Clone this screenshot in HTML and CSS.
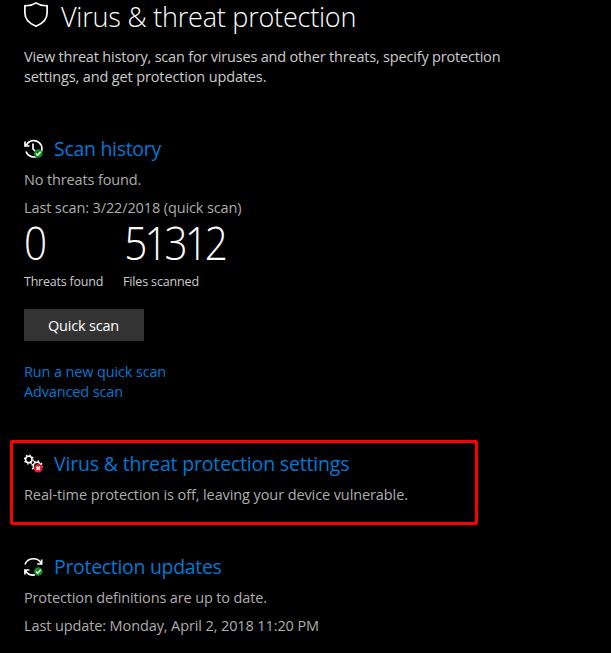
FILE: index.html
```
<!DOCTYPE html>
<html lang="en">
<head>
<meta charset="utf-8">
<title>Virus &amp; threat protection</title>
<link rel="stylesheet" href="styles.css">
</head>
<body>
<main class="page">
  <header class="page-header">
    <svg class="shield" width="26" height="28" viewBox="0 0 26 28" fill="none" stroke="#fff" stroke-width="1.7" stroke-linejoin="round"><path d="M13 2.9C10 5 6 6 1.9 5.7V13c0 6.400 4.500 10.600 11.100 13.300C19.600 23.600 24.100 19.400 24.100 13V5.700C20 6 16 5 13 2.900Z"/></svg>
    <h1>Virus &amp; threat protection</h1>
  </header>
  <p class="intro"><span class="intro-first">View threat history, scan for viruses and other threats, specify protection</span><br>settings, and get protection updates.</p>

  <section class="history">
    <div class="heading">
      <svg class="icon" width="20" height="20" viewBox="0 0 20 20" fill="none" stroke="#fff" stroke-width="1.700"><path d="M2.200 6.500A8.200 8.200 0 1 1 2 12.500M1 2.500v4.500h4.500M9 4.500v5.500l3 3"/><circle cx="14.300" cy="14.500" r="4.300" fill="#0c8f1c" stroke="none"/><path d="M12 14.500l1.700 1.700 3-3.400" stroke-width="1.400"/></svg>
      <h2 class="t-history">Scan history</h2>
    </div>
    <p class="status">No threats found.</p>
    <p class="status last-scan">Last scan: 3/22/2018 (quick scan)</p>
    <div class="stats">
      <div class="stat"><span class="number">0</span><span class="label">Threats found</span></div>
      <div class="stat"><span class="number files">51312</span><span class="label label-files">Files scanned</span></div>
    </div>
    <button class="scan-button" type="button">Quick scan</button>
    <nav class="links"><a href="#">Run a new quick scan</a><a href="#">Advanced scan</a></nav>
  </section>

  <section class="settings">
    <div class="heading">
      <svg class="icon" width="20" height="20" viewBox="0 0 20 20" fill="none" stroke="#fff"><circle cx="4.800" cy="5.500" r="3.200" stroke-width="1.500"/><circle cx="4.800" cy="5.500" r="4.400" stroke-width="1.400" stroke-dasharray="1.500 1.955"/><circle cx="13" cy="12" r="3.700" stroke-width="1.500"/><circle cx="13" cy="12" r="5" stroke-width="1.400" stroke-dasharray="1.700 2.227"/><circle cx="14.200" cy="14.300" r="4.300" fill="#e81123" stroke="none"/><path d="M12.500 12.600l3.400 3.400m0-3.400l-3.400 3.400" stroke-width="1.600"/></svg>
      <h2 class="t-settings">Virus &amp; threat protection settings</h2>
    </div>
    <p class="status realtime">Real-time protection is off, leaving your device vulnerable.</p>
  </section>

  <section class="updates">
    <div class="heading">
      <svg class="icon" width="20" height="20" viewBox="0 0 20 20" fill="none" stroke="#fff" stroke-width="1.600"><path d="M1 7.500C3.500 .2 14-.2 17.300 6.500M17.700 2.500v4.500h-4.500M.9 17.500V13h4.500M1.200 13.500C3.500 17.500 7 18.500 11 18"/><circle cx="14.300" cy="14.500" r="4.300" fill="#0c8f1c" stroke="none"/><path d="M12 14.500l1.700 1.700 3-3.400" stroke-width="1.400"/></svg>
      <h2 class="t-updates">Protection updates</h2>
    </div>
    <p class="status">Protection definitions are up to date.</p>
    <p class="status last-update">Last update: Monday, April 2, 2018 11:20 PM</p>
  </section>
</main>
</body>
</html>
```
FILE: styles.css
```
* { box-sizing: border-box; }

html, body { margin: 0; background: #000; }

body {
  height: 653px;
  overflow: hidden;
  color: #fff;
  font: 14.5px/20px "Open Sans", "Noto Sans", sans-serif;
  letter-spacing: -0.14px;
  white-space: nowrap;
}

h1, h2, p { margin: 0; font-weight: 400; }

.page { padding-left: 23px; }

.page-header { display: flex; height: 47px; }
.shield { flex: none; }
h1 {
  margin-left: 12px;
  font-size: 27px;
  font-weight: 360;
  line-height: 33px;
  letter-spacing: -0.22px;
}

.intro { padding-left: 1px; color: #ccc; }
.intro-first { letter-spacing: -0.19px; }

.history { margin-top: 48px; }

.heading { display: flex; align-items: center; height: 28px; margin-bottom: 7px; }
.icon { flex: none; margin: -1px 10px 0 1px; }
h2 {
  color: #0078d7;
  font-size: 19.5px;
  line-height: 28px;
}
.t-history { letter-spacing: -0.3px; }
.t-settings { letter-spacing: -0.17px; }
.t-updates { letter-spacing: -0.31px; }

.status { padding-left: 1px; margin-bottom: 8px; color: #adadad; }
.last-scan { margin-bottom: 0; letter-spacing: -0.12px; }
.realtime { letter-spacing: -0.1px; }
.last-update { letter-spacing: -0.11px; }

.stats { display: flex; height: 91px; padding-left: 1px; }
.stat { width: 99px; }
.number {
  display: block;
  height: 54px;
  font-size: 46px;
  font-weight: 300;
  line-height: 48px;
  letter-spacing: -3.4px;
  transform: scaleX(0.88);
  transform-origin: left;
}
.files { padding-left: 1.5px; }
.label {
  display: block;
  color: #ccc;
  font-size: 12.5px;
  letter-spacing: -0.22px;
}
.label-files { letter-spacing: -0.15px; }

.scan-button {
  display: block;
  width: 120px;
  height: 32px;
  margin-left: 1px;
  padding: 1px 1px 0 0;
  border: 0;
  background: #333;
  color: #fff;
  font: inherit;
  letter-spacing: -0.18px;
}

.links { display: flex; flex-direction: column; margin: 21px 0 0 1px; }
.links a { color: #0078d7; text-decoration: none; }

.settings {
  width: 468px;
  height: 85px;
  margin: 38px 0 0 -13px;
  padding: 7px 0 0 10px;
  border: 3px solid #f00;
  border-radius: 2px;
}

.updates { margin-top: 28px; }
```
